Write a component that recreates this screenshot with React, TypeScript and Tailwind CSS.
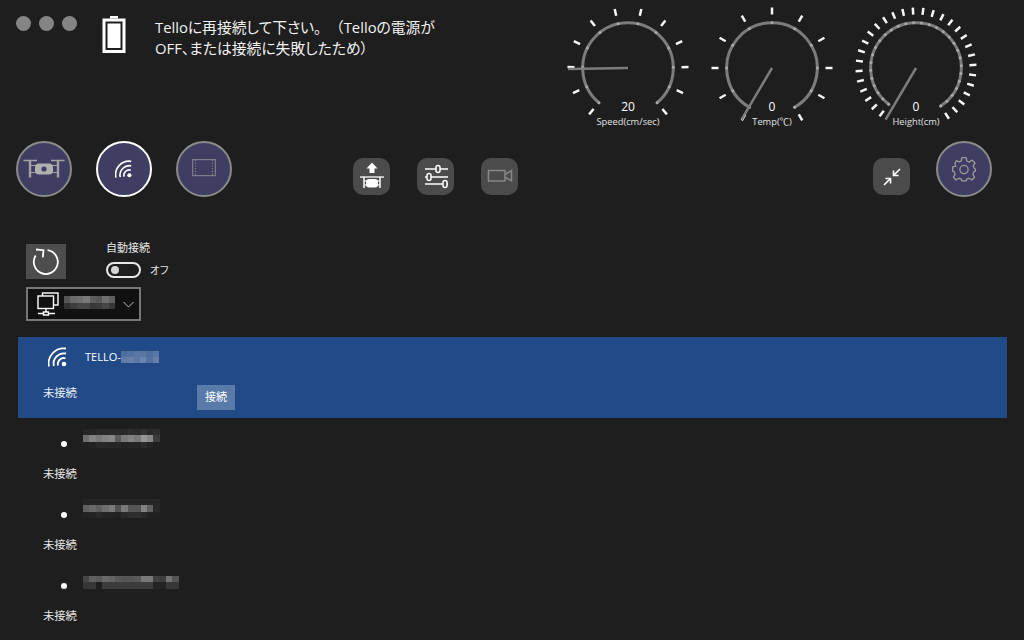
import React from "react";

const FONT = "font-['Open_Sans','Noto_Sans_CJK_JP',sans-serif] [text-spacing-trim:space-all]";

function polar(cx: number, cy: number, r: number, deg: number) {
  const a = ((deg - 90) * Math.PI) / 180;
  return [cx + r * Math.cos(a), cy + r * Math.sin(a)];
}

function Gauge({
  start,
  end,
  step,
  needle,
  value,
  label,
}: {
  start: number;
  end: number;
  step: number;
  needle: number;
  value: string;
  label: string;
}) {
  const c = 72;
  const cy = 68;
  const r = 45.3;
  const ticks: number[] = [];
  for (let a = start; a <= end + 0.01; a += step) ticks.push(a);
  const [sx, sy] = polar(c, cy, r, start);
  const [ex, ey] = polar(c, cy, r, end);
  const [nx, ny] = polar(c, cy, 60, needle);
  return (
    <div className="relative w-[144px] h-[132px]">
      <svg width="144" height="132" viewBox="0 0 144 132" className="block">
        <path d={`M${sx} ${sy} A${r} ${r} 0 1 1 ${ex} ${ey}`} fill="none" stroke="#7c7c7c" strokeWidth="3" strokeLinecap="round" />
        {ticks.map((a, i) => {
          const [x1, y1] = polar(c, cy, 53.5, a);
          const [x2, y2] = polar(c, cy, 60.5, a);
          const [dx, dy] = polar(c, cy, r, a);
          return (
            <g key={i}>
              <line x1={x1} y1={y1} x2={x2} y2={y2} stroke="#f6f6f6" strokeWidth="2.500" />
              <circle cx={dx} cy={dy} r="1.500" fill="#a8a8a8" />
            </g>
          );
        })}
        <line x1={c} y1={cy} x2={nx} y2={ny} stroke="#7c7c7c" strokeWidth="2.500" />
      </svg>
      <div className="absolute left-0 right-0 top-[99px] text-center text-[12px] leading-4 font-medium text-white">{value}</div>
      <div className="absolute left-0 right-0 top-[116px] text-center text-[9.300px] leading-3 text-[#e2e2e2]">{label}</div>
    </div>
  );
}

function Wifi({ size = 20 }: { size?: number }) {
  return (
    <svg width={size} height={size} viewBox="0 0 20 20" fill="none" stroke="#ffffff" strokeWidth="1.800" className="shrink-0">
      <path d="M1 19.500A15 15 0 0 1 18 1.500" />
      <path d="M5.800 19A10.500 10.500 0 0 1 18 6.500" />
      <path d="M10 18.500A6 6 0 0 1 17.500 11.300" />
      <circle cx="16" cy="17" r="2.300" fill="#ffffff" stroke="none" />
    </svg>
  );
}

function Round({ active, children }: { active?: boolean; children: React.ReactNode }) {
  return (
    <div
      className={`w-[56px] h-[56px] rounded-full bg-[#3f3e62] border-2 flex items-center justify-center shrink-0 ${
        active ? "border-white" : "border-[#8a8a8a]"
      }`}
    >
      {children}
    </div>
  );
}

function Square({ children, className = "" }: { children: React.ReactNode; className?: string }) {
  return <div className={`w-[37px] h-[37px] rounded-[10px] bg-[#4b4b4b] flex items-center justify-center shrink-0 ${className}`}>{children}</div>;
}

function Mosaic({ rows, className = "" }: { rows: number[][]; className?: string }) {
  return (
    <div className={`flex flex-col ${className}`}>
      {rows.map((row, i) => (
        <div key={i} className="flex">
          {row.map((v, j) => (
            <div key={j} className="w-[6.400px] h-[6.400px]" style={{ background: `rgb(${v},${v},${v})` }} />
          ))}
        </div>
      ))}
    </div>
  );
}

function MosaicBlue({ rows, className = "" }: { rows: number[][]; className?: string }) {
  return (
    <div className={`flex flex-col ${className}`}>
      {rows.map((row, i) => (
        <div key={i} className="flex">
          {row.map((v, j) => (
            <div key={j} className="w-[6.400px] h-[6.400px]" style={{ background: `rgba(255,255,255,${v})` }} />
          ))}
        </div>
      ))}
    </div>
  );
}

function PlainRow({ rows, offset }: { rows: number[][]; offset: string }) {
  return (
    <div className="h-[71px] pl-[25px]">
      <div className="flex items-start h-[40px]">
        <div className="w-[6px] h-[6px] rounded-full bg-white ml-[18px] mt-[16px]" />
        <Mosaic rows={rows} className={`ml-[16px] ${offset}`} />
      </div>
      <div className="text-[11.300px] leading-4 text-[#e6e6e6] mt-[1px]">未接続</div>
    </div>
  );
}

export default function App() {
  return (
    <div className={`w-[1024px] h-[640px] overflow-hidden bg-[#1e1e1e] text-white ${FONT}`}>
      {/* header */}
      <div className="flex h-[132px] pr-[36px]">
        <div className="flex gap-[8px] pl-[16px] pt-[16px]">
          <div className="w-[15px] h-[15px] rounded-full bg-[#858585]" />
          <div className="w-[15px] h-[15px] rounded-full bg-[#858585]" />
          <div className="w-[15px] h-[15px] rounded-full bg-[#858585]" />
        </div>
        <svg width="24" height="38" viewBox="0 0 24 38" className="ml-[25px] mt-[16px] shrink-0">
          <rect x="8" y="0" width="8" height="2.500" fill="#ffffff" />
          <path fillRule="evenodd" d="M0.500 2.500H23.500V37H0.500ZM3.500 5.500V34H20.500V5.500Z" fill="#ffffff" />
          <rect x="5.500" y="7.500" width="13" height="24.500" fill="#ffffff" />
        </svg>
        <div className="ml-[29px] mt-[17px] w-[295px] text-[14.800px] leading-[21px] text-[#f2f2f2] [font-feature-settings:'palt']">
          Telloに再接続して下さい
          <span className="[font-feature-settings:normal]">。（</span>
          Telloの電源が
          <br />
          OFF、または接続に失敗したため）
        </div>
        <div className="ml-auto flex">
          <Gauge start={-140} end={140} step={280 / 11} needle={-91} value="20" label="Speed(cm/sec)" />
          <Gauge start={-150} end={150} step={30} needle={-149.500} value="0" label="Temp(℃)" />
          <Gauge start={-143} end={147} step={10} needle={-149.500} value="0" label="Height(cm)" />
        </div>
      </div>

      {/* toolbar */}
      <div className="flex items-start h-[103px] mt-[9px] pl-[16px] pr-[32px]">
        <div className="flex gap-[24px]">
          <Round>
            <svg width="42" height="20" viewBox="0 0 42 20" fill="none" stroke="#a2a2a2">
              <path d="M0.500 1.500H14M28 1.500H41.500" strokeWidth="1.300" />
              <path d="M7 1V18.500M35 1V18.500" strokeWidth="2.400" />
              <path d="M7 6.500H14M7 13.500H14M28 6.500H35M28 13.500H35" strokeWidth="1.200" />
              <rect x="12" y="4.500" width="18" height="11" rx="4" fill="#b0b0b0" stroke="none" />
              <circle cx="21" cy="10" r="2.600" fill="#3f3e62" stroke="none" />
            </svg>
          </Round>
          <Round active>
            <Wifi size={18} />
          </Round>
          <Round>
            <svg width="24" height="20" viewBox="0 0 24 20" fill="none" stroke="#7c7c88" strokeWidth="1.200" className="-mt-[3px]">
              <rect x="0.600" y="1.600" width="22.800" height="16" />
              <path d="M3.500 2V18M20.500 2V18" strokeDasharray="1.200 1.500" />
            </svg>
          </Round>
        </div>
        <div className="flex gap-[27px] ml-[121px] mt-[17px]">
          <Square>
            <svg width="37" height="37" viewBox="0 0 37 37" fill="none" stroke="#ffffff">
              <path d="M19 4.500L24.500 10.500H21.500V15H16.500V10.500H13.500Z" fill="#ffffff" stroke="none" />
              <path d="M7 19H31" strokeWidth="1.300" />
              <path d="M11 19V30M27 19V30" strokeWidth="1.500" />
              <rect x="13" y="21" width="12" height="8.500" rx="3" fill="#ffffff" stroke="none" />
              <path d="M11 23H14M24 23H27M11 27H14M24 27H27" strokeWidth="1" />
            </svg>
          </Square>
          <Square>
            <svg width="37" height="37" viewBox="0 0 37 37" fill="none" stroke="#ffffff" strokeWidth="1.500">
              <path d="M8 11H19M23 11H31M8 19H10M14 19H31M8 26H26M30 26H31" />
              <rect x="19" y="7.500" width="4" height="7" rx="2" />
              <rect x="10" y="15.500" width="4" height="7" rx="2" />
              <rect x="26" y="22.500" width="4" height="7" rx="2" />
            </svg>
          </Square>
          <Square>
            <svg width="37" height="37" viewBox="0 0 37 37" fill="none" stroke="#878787" strokeWidth="1.500">
              <rect x="7.500" y="12.500" width="16.500" height="10.500" />
              <path d="M24 16.500L30.500 12.500V23L24 19" />
            </svg>
          </Square>
        </div>
        <div className="ml-auto flex items-start gap-[26px]">
          <Square className="mt-[17px]">
            <svg width="24" height="24" viewBox="0 0 24 24" fill="none" stroke="#ffffff" strokeWidth="1.600">
              <path d="M20 4L13.500 10.500M13.500 5.500V10.500H18.500" />
              <path d="M4 20L10.500 13.500M5.500 13.500H10.500V18.500" />
            </svg>
          </Square>
          <Round>
            <svg width="26" height="26" viewBox="0 0 24 24" fill="none" stroke="#9a9a9a" strokeWidth="1.200" strokeLinejoin="round">
              <path d="M10 1.500H14L14.600 4.600L16.900 5.600L19.500 3.800L22.200 6.500L20.400 9.100L21.400 11.400L22.500 12V14L21 14.600L20.200 17L21.800 19.600L19.200 22.200L16.800 20.500L14.500 21.400L14 23H10L9.500 21.400L7.200 20.500L4.800 22.200L2.200 19.600L3.800 17L3 14.600L1.500 14V10L4.300 9.500L3.600 7L5 4.200L7.300 5.500L9.500 4.500Z" />
              <circle cx="12" cy="12.500" r="3.800" />
            </svg>
          </Round>
        </div>
      </div>

      {/* controls */}
      <div className="pl-[26px] h-[93px]">
        <div className="flex h-[43px]">
          <div className="w-[40px] h-[35px] bg-[#4d4d4d] flex items-center justify-center">
            <svg width="28" height="28" viewBox="0 0 28 28" fill="none" stroke="#ffffff" strokeWidth="1.800" className="-ml-[1px]">
              <path d="M15.500 2.100A12 12 0 1 1 3.700 7.500" />
              <path d="M4 1.500L11.500 2.200L10.800 9.300" />
            </svg>
          </div>
          <div className="ml-[40px] -mt-[1px]">
            <div className="text-[11px] leading-[11px] -mt-[1px] text-[#e6e6e6]">自動接続</div>
            <div className="flex items-center mt-[9px]">
              <div className="w-[35px] h-[16px] rounded-full border-2 border-[#e8e8e8] flex items-center pl-[3px]">
                <div className="w-[8px] h-[8px] rounded-full bg-[#d4d4d4]" />
              </div>
              <span className="ml-[9px] text-[10.500px] leading-4 text-[#e6e6e6] [font-feature-settings:'palt']">オフ</span>
            </div>
          </div>
        </div>
        <div className="w-[115px] h-[34px] bg-[#111111] border-2 border-[#777777] flex items-center pl-[9px]">
          <svg width="22" height="24" viewBox="0 0 22 24" fill="none" stroke="#ffffff" strokeWidth="1.400" className="shrink-0">
            <rect x="5.500" y="1" width="15.500" height="12" />
            <rect x="1" y="4" width="15.500" height="12.500" fill="#111111" />
            <path d="M9 16.500V20M1 21.500H6.500M11.500 21.500H18M6.500 20H11.500V23H6.500Z" />
          </svg>
          <Mosaic
            className="ml-[5px] -mt-[3px]"
            rows={[
              [85, 105, 110, 120, 95, 85, 110, 95],
              [50, 60, 70, 70, 55, 60, 70, 55],
            ]}
          />
          <svg width="11" height="7" viewBox="0 0 11 7" fill="none" stroke="#bdbdbd" strokeWidth="1" className="ml-[8px]">
            <path d="M0.500 1L5.500 6L10.500 1" />
          </svg>
        </div>
      </div>

      {/* selected network */}
      <div className="ml-[18px] mr-[17px] h-[81px] bg-[#224a87]">
        <div className="flex items-center pl-[30px] pt-[10px]">
          <Wifi />
          <span className="ml-[17px] text-[11px] leading-4 text-white">TELLO-</span>
          <MosaicBlue
            rows={[
              [0.2, 0.22, 0.25, 0.25, 0.2, 0.25],
              [0.28, 0.3, 0.26, 0.32, 0.22, 0.3],
            ]}
          />
        </div>
        <div className="flex items-start mt-[9px] pl-[25px]">
          <span className="text-[11.300px] leading-4 text-[#e8edf5] mt-[9px]">未接続</span>
          <div className="ml-[120px] mt-[9px] w-[38px] h-[25px] bg-[#587ba9] text-[11px] text-white flex items-center justify-center">接続</div>
        </div>
      </div>

      {/* other networks */}
      <div className="ml-[18px] mt-[7px]">
        <PlainRow
          offset="mt-[4px]"
          rows={[
            [38, 38, 42, 42, 42, 42, 42, 46, 42, 50, 42, 46],
            [110, 130, 120, 130, 135, 90, 120, 130, 120, 150, 135, 60],
            [32, 34, 40, 40, 38, 40, 34, 36, 36, 42, 36, 32],
          ]}
        />
        <PlainRow
          offset="mt-[3px]"
          rows={[
            [36, 36, 36, 36, 36, 36, 36, 36, 36, 36, 36, 38],
            [95, 105, 95, 110, 120, 80, 120, 85, 85, 130, 95, 40],
            [34, 36, 42, 36, 36, 34, 42, 46, 46, 40, 34, 32],
          ]}
        />
        <PlainRow
          offset="mt-[9px]"
          rows={[
            [70, 95, 90, 105, 100, 90, 85, 85, 90, 120, 120, 65, 60, 115, 85],
            [55, 55, 30, 60, 60, 60, 60, 60, 60, 60, 60, 35, 35, 55, 55],
          ]}
        />
      </div>
    </div>
  );
}
